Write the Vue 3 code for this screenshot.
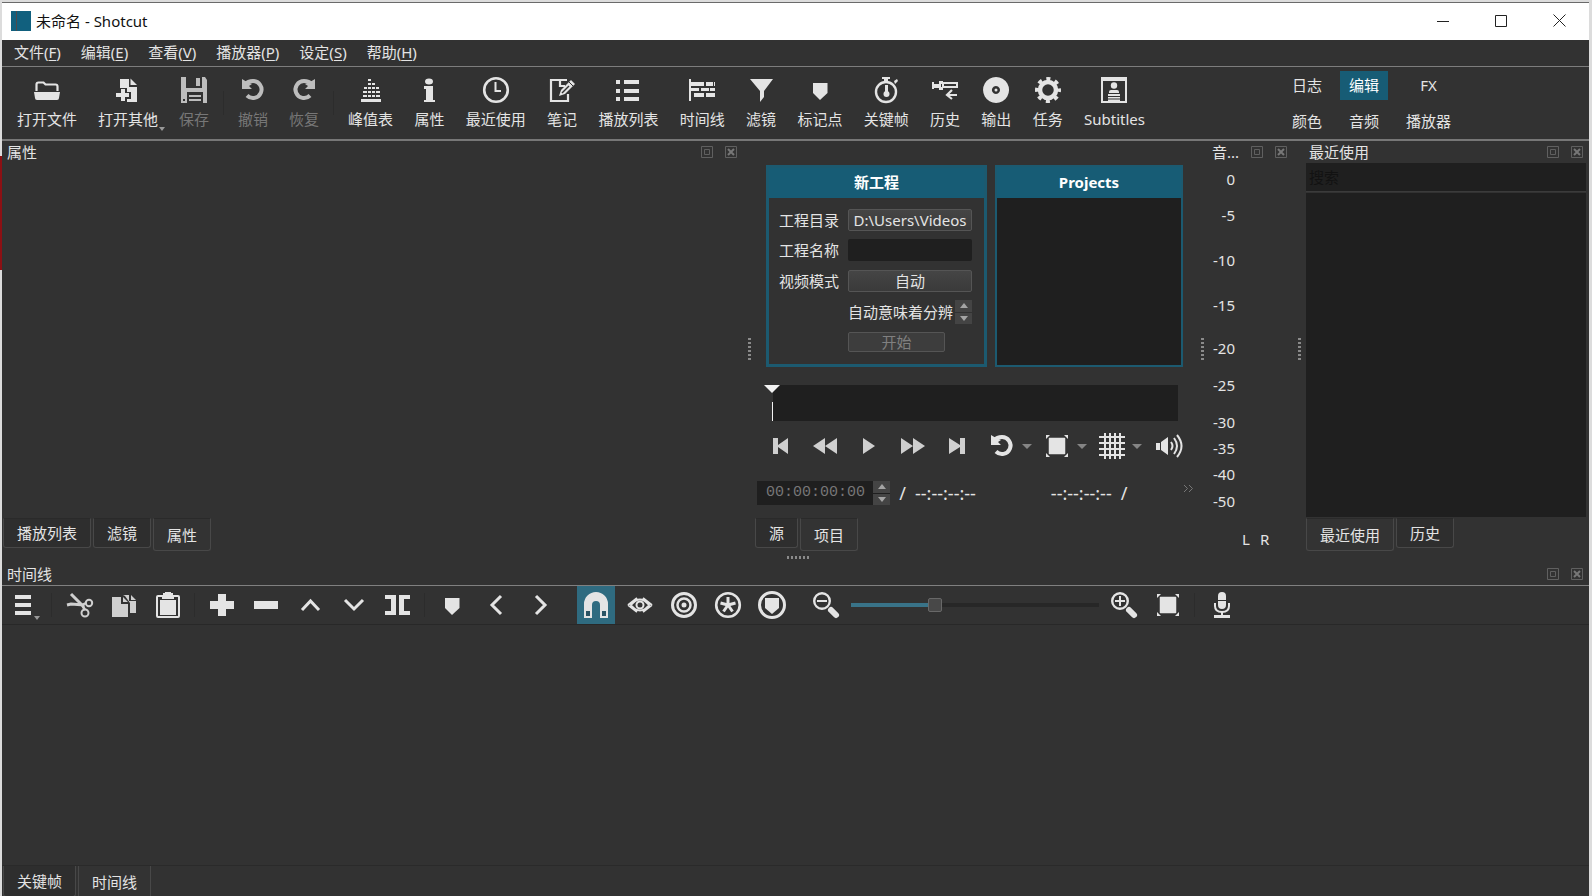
<script setup>
import { ref } from 'vue'

const shapes = {
  open: '<path d="M2.5 14V7.5q0-2 2-2h5l2 2h10q2 0 2 2V14" fill="none" stroke="currentColor" stroke-width="2.2"/><path d="M0 15h26l-1 6q0 2-2 2H3q-2 0-2-2z"/>',
  openOther: '<path d="M5 2h9v8h8v15H12v-3h4v-7h-4v-4H5z"/><path d="M15.5 1.5 22 8h-6.500z"/><path d="M6 12h4v4h4v4h-4v4H6v-4H1v-4h5z"/>',
  save: '<path fill-rule="evenodd" d="M0 0h5v11h16V0h3l2 3v23H0zM2 22v2h2v-2zM6 15v11h16V15z"/><path d="M15 1h4v8h-4zM8 18h12v2H8zM8 22h12v2H8z"/>',
  undo: '<path d="M5 7.500Q8 4 13 4a8.500 8.500 0 1 1-6 14.500" fill="none" stroke="currentColor" stroke-width="4"/><path d="M2 2v10h10L9 9l3-2-5-2z"/>',
  redo: '<path d="M21 7.500Q18 4 13 4a8.500 8.500 0 1 0 6 14.500" fill="none" stroke="currentColor" stroke-width="4"/><path d="M24 2v10H14l3-3-3-2 5-2z"/>',
  peak: '<path d="M3 22h20v3H3zM5 18h4v2H5zM10 18h3v2h-3zM14 18h3v2h-3zM18 18h4v2h-4zM5 14h4v2H5zM10 14h3v2h-3zM14 14h3v2h-3zM18 14h4v2h-4zM6 10h3v2H6zM10 10h3v2h-3zM14 10h3v2h-3zM18 10h3v2h-3zM10 6h3v2h-3zM14 6h3v2h-3zM10 2h3v2h-3z"/>',
  info: '<ellipse cx="13" cy="4.500" rx="4" ry="3"/><path d="M8 9h9v14h2v2H8v-2h2V12H8z"/>',
  clock: '<circle cx="13" cy="13" r="11.800" fill="none" stroke="currentColor" stroke-width="2.600"/><path d="M12.500 5v9H18" fill="none" stroke="currentColor" stroke-width="2"/>',
  note: '<path d="M18 3H2v21h17v-7M11 3v6h5" fill="none" stroke="currentColor" stroke-width="2.200"/><path d="m10 19 2-6L22 3l4 4-10 10z"/><path d="m13 16 7-7" stroke="#323232" stroke-width="1.500"/><path d="m20 5 4 4" stroke="#323232"/>',
  list: '<path d="M1 3h4v4H1zM9 3h15v4H9zM1 12h4v4H1zM9 12h15v4H9zM1 20h4v4H1zM9 20h15v4H9z"/>',
  timeline: '<path d="M0 2h2v22H0zM2 5h13v4H2zM17 5h7v4h-7zM25 5h1v4h-1zM2 11h8v3H2zM12 11h8v3h-8zM21 11h5v3h-5zM5 16h10v4H5zM17 16h9v4h-9z"/>',
  filter: '<path d="M2 2h23L16 14v6l-4 5V14z"/>',
  marker: '<path d="M6 6h14.500v10L13 23l-7-7z"/>',
  stopwatch: '<circle cx="13" cy="15" r="10" fill="none" stroke="currentColor" stroke-width="2.400"/><path d="M9 0h8v2h-2v4h-4V2H9zM21 4l3-2 1 2-3 3zM12 8h3v7h-3z"/><circle cx="13.500" cy="17" r="3"/>',
  history: '<path fill-rule="evenodd" d="M0 5h2v2h5V4h4v1h15v6H11v2H7v-2H2v1H0zM9 7v3h1V7zM12 7v2h12V7z"/><path d="M15 18h10M20 13l-5 5 5 4" fill="none" stroke="currentColor" stroke-width="2.200"/>',
  disc: '<path fill-rule="evenodd" d="M13 0a13 13 0 1 0 .1 0zM13 9a4 4 0 1 1-.1 0z"/><circle cx="13" cy="13" r="1.500"/>',
  gear: '<circle cx="13" cy="13" r="8" fill="none" stroke="currentColor" stroke-width="4.500"/><circle cx="13" cy="13" r="11" fill="none" stroke="currentColor" stroke-width="4" stroke-dasharray="4 4.640" stroke-dashoffset="2"/>',
  subtitles: '<path fill-rule="evenodd" d="M0 0h26v26H0zM2 4v20h22V4z"/><circle cx="13" cy="8.500" r="3.200"/><path d="M8 16v-1q0-2 2-2h6q2 0 2 2v1zM7 17h12v2H7zM7 20h12v1.500H7zM7 22.500h12V24H7z"/>',
  first: '<path d="M5 5h5v7l10-7v16l-10-7v7H5z"/>',
  rewind: '<path d="M13 5v16L1 13zM25 5v16L13 13z"/>',
  play: '<path d="M7 5v16l12-8z"/>',
  forward: '<path d="M1 5v16l12-8zM13 5v16l12-8z"/>',
  last: '<path d="M5 5l11 7V5h5v16h-5v-7L5 21z"/>',
  fit: '<path d="M5.500 5.500h15v15h-15z" stroke="currentColor" stroke-width="1.500" stroke-linejoin="round"/><path d="M2 2h4L2 6zM24 2v4l-4-4zM2 24v-4l4 4zM24 24h-4l4-4z"/>',
  grid: '<path d="M6 0v26M11 0v26M16 0v26M21 0v26M0 4h26M0 10h26M0 16h26M0 22h26" fill="none" stroke="currentColor" stroke-width="2"/>',
  volume: '<path d="M0 10h4v7H0zM5 9l7-5v18l-7-5z"/><path d="M15 9q3 4 0 8M18 5q6 8 0 16M21 2q9 11 0 22" fill="none" stroke="currentColor" stroke-width="2"/>',
  menu: '<path d="M5 3h16v4H5zM5 11h16v4H5zM5 19h16v4H5z"/>',
  cut: '<path d="M4 2 17 15M0 13l4-1 13 1" fill="none" stroke="currentColor" stroke-width="3"/><circle cx="22" cy="11" r="3.200" fill="none" stroke="currentColor" stroke-width="2"/><circle cx="18" cy="21" r="3.500" fill="none" stroke="currentColor" stroke-width="2"/><path d="m15 13 3 5M15 13l4-2" stroke="currentColor" stroke-width="2.500"/>',
  copy: '<path d="M1 5h9v7h7v13H1z"/><path d="m12 5 5 5h-5zM12 3l6 0v6h7v12h-6V11l-5-7zM20 3l5 5h-5z"/>',
  paste: '<path fill-rule="evenodd" d="M3 3h5V1h2V0h6v1h2v2h5q2 0 2 2v19q0 2-2 2H3q-2 0-2-2V5q0-2 2-2zm0 2v19h20V5h-4v2H7V5z"/><path d="M5 8h16v15H5z"/>',
  plus: '<path d="M9 2h8v7h8v8h-8v7H9v-7H1V9h8z"/>',
  minus: '<path d="M1 9h24v8H1z"/>',
  up: '<path d="m5 18 8.500-9 8.500 9" fill="none" stroke="currentColor" stroke-width="3"/>',
  down: '<path d="m4 8 9 9 9-9" fill="none" stroke="currentColor" stroke-width="3"/>',
  split: '<path d="M0 3h11v20H0v-4h6V7H0zM25 3H14v20h11v-4h-6V7h6z"/>',
  prev: '<path d="M18 4 9 13l9 9" fill="none" stroke="currentColor" stroke-width="3"/>',
  next: '<path d="m9 4 9 9-9 9" fill="none" stroke="currentColor" stroke-width="3"/>',
  magnet: '<path d="M1 26V12a12 12 0 0 1 24 0v14h-8V13a4 4 0 0 0-8 0v13z"/><path d="M3 19h4v5H3zM19 19h4v5h-4z" fill="#2b5363"/>',
  eye: '<path d="m1 13 9-7M1 13l9 7M25 13l-9-7M25 13l-9 7M4 13q9-11 18 0-9 11-18 0z" fill="none" stroke="currentColor" stroke-width="1.800"/><circle cx="13" cy="13" r="3.500" fill="none" stroke="currentColor" stroke-width="2"/>',
  ripple: '<circle cx="13" cy="13" r="11.500" fill="none" stroke="currentColor" stroke-width="3"/><circle cx="13" cy="13" r="6.500" fill="none" stroke="currentColor" stroke-width="2.500"/><circle cx="13" cy="13" r="2.500"/>',
  rippleAll: '<circle cx="13" cy="13" r="11.800" fill="none" stroke="currentColor" stroke-width="2.600"/><path d="M13 13V5M13 13l7.500-2M13 13l4.500 6.500M13 13l-4.500 6.500M13 13l-7.500-2" stroke="currentColor" stroke-width="3"/>',
  rippleMarker: '<circle cx="13" cy="13" r="12.500" fill="none" stroke="currentColor" stroke-width="3"/><path d="M6 6h14v10l-7 6-7-6z"/>',
  zoomOut: '<circle cx="9" cy="9" r="7.800" fill="none" stroke="currentColor" stroke-width="2.400"/><path d="M4 8h10v2H4z"/><path d="m18 18 5 5" stroke="currentColor" stroke-width="6" stroke-linecap="round"/>',
  zoomIn: '<circle cx="9" cy="9" r="7.800" fill="none" stroke="currentColor" stroke-width="2.400"/><path d="M4 8h4V4h2v4h4v2h-4v4H8v-4H4z"/><path d="m18 18 5 5" stroke="currentColor" stroke-width="6" stroke-linecap="round"/>',
  mic: '<path d="M9 8V4q0-4 4-4t4 4v4zM9 9h8v4q0 4-4 4t-4-4z"/><path d="M6 11v3q0 6 7 6t7-6v-3" fill="none" stroke="currentColor" stroke-width="2"/><path d="M12 20h2v3h7v3H5v-3h7z"/>'
}

const menus = [['文件', 'F'], ['编辑', 'E'], ['查看', 'V'], ['播放器', 'P'], ['设定', 'S'], ['帮助', 'H']]
const viewTools = [
  ['peak', '峰值表'], ['info', '属性'], ['clock', '最近使用'], ['note', '笔记'], ['list', '播放列表'],
  ['timeline', '时间线'], ['filter', '滤镜'], ['marker', '标记点'], ['stopwatch', '关键帧'],
  ['history', '历史'], ['disc', '输出'], ['gear', '任务'], ['subtitles', 'Subtitles']
]
const layouts = ['日志', '编辑', 'FX', '颜色', '音频', '播放器']
const transport = [['first', '跳到开头'], ['rewind', '快退'], ['play', '播放'], ['forward', '快进'], ['last', '跳到结尾']]
const transportMenus = [['undo', '循环'], ['fit', '缩放'], ['grid', '网格']]
const meter = [[-5, 36], [-10, 45], [-15, 45], [-20, 44], [-25, 37], [-30, 37], [-35, 26], [-40, 26], [-50, 27]]
const editTools = [['plus', '追加'], ['minus', '删除'], ['up', '提升'], ['down', '覆盖'], ['split', '分割']]
const markTools = [['marker', '标记'], ['prev', '上一个标记'], ['next', '下一个标记']]
const modeTools = [['magnet', '吸附'], ['eye', '拖拽预览'], ['ripple', '波纹'], ['rippleAll', '全部轨道波纹'], ['rippleMarker', '标记波纹']]

const activeLayout = ref('编辑')
const projectName = ref('')
const timecode = ref('00:00:00:00')
const search = ref('')
const zoom = ref(33)
</script>

<template>
  <div class="desktop">
    <div class="window">
      <header class="titlebar">
        <span class="app-icon"></span>
        <span class="title">未命名 - Shotcut</span>
        <button class="caption" aria-label="最小化"><svg width="12" height="12"><path d="M0 6.500h12" /></svg></button>
        <button class="caption" aria-label="最大化"><svg width="12" height="12"><path d="M.5.5h11v11H.5z" /></svg></button>
        <button class="caption" aria-label="关闭"><svg width="13" height="13"><path d="m.5.5 12 12m0-12-12 12" /></svg></button>
      </header>

      <nav class="menubar">
        <button v-for="m in menus" :key="m[1]">{{ m[0] }}(<u>{{ m[1] }}</u>)</button>
      </nav>

      <div class="toolbar">
        <button class="tool"><svg class="icon" viewBox="0 0 26 26" v-html="shapes.open"></svg>打开文件</button>
        <button class="tool other"><svg class="icon" viewBox="0 0 26 26" v-html="shapes.openOther"></svg>打开其他<i class="corner"></i></button>
        <button class="tool save" disabled><svg class="icon" viewBox="0 0 26 26" v-html="shapes.save"></svg>保存</button>
        <i class="sep"></i>
        <button class="tool" disabled><svg class="icon" viewBox="0 0 26 26" v-html="shapes.undo"></svg>撤销</button>
        <button class="tool redo" disabled><svg class="icon" viewBox="0 0 26 26" v-html="shapes.redo"></svg>恢复</button>
        <i class="sep"></i>
        <div class="view-tools">
          <button v-for="t in viewTools" :key="t[0]" class="tool">
            <svg class="icon" viewBox="0 0 26 26" v-html="shapes[t[0]]"></svg>{{ t[1] }}
          </button>
        </div>
        <div class="layouts">
          <button v-for="l in layouts" :key="l" :class="{ on: l === activeLayout }" @click="activeLayout = l">{{ l }}</button>
        </div>
      </div>

      <main class="docks">
        <section class="dock">
          <h2 class="dock-title"><span>属性</span>
            <button aria-label="浮动"><svg width="12" height="12"><path d="M.5.5h11v11H.5zM3.500 3.500h5v5h-5z" /></svg></button>
            <button aria-label="关闭"><svg width="12" height="12"><path d="M.5.5h11v11H.5z" /><path class="x" d="m3 3 6 6m0-6-6 6" /></svg></button>
          </h2>
          <div class="grow"></div>
          <div class="tabs"><button>播放列表</button><button>滤镜</button><button class="on">属性</button></div>
        </section>
        <i class="grip"></i>

        <section class="player">
          <div class="cards">
            <form class="card new" @submit.prevent>
              <h3>新工程</h3>
              <div class="fields">
                <label for="folder">工程目录</label><button id="folder" type="button" class="push">D:\Users\Videos</button>
                <label for="name">工程名称</label><input id="name" v-model="projectName" type="text">
                <label for="mode">视频模式</label><button id="mode" type="button" class="push">自动</button>
                <div class="hint"><span>自动意味着分辨</span>
                  <span class="spin"><button type="button" aria-label="向上"><i class="tri-up"></i></button><button type="button" aria-label="向下"><i class="tri-down"></i></button></span>
                </div>
                <button class="push start" disabled>开始</button>
              </div>
            </form>
            <div class="card recent">
              <h3>Projects</h3>
              <div class="project-list"></div>
            </div>
          </div>

          <div class="scrub"><i class="head"></i><i class="needle"></i></div>

          <div class="transport">
            <button v-for="t in transport" :key="t[0]" class="cell dim" :aria-label="t[1]"><svg class="icon" viewBox="0 0 26 26" v-html="shapes[t[0]]"></svg></button>
            <div class="drops">
              <button v-for="t in transportMenus" :key="t[0]" :aria-label="t[1]"><svg class="icon" viewBox="0 0 26 26" v-html="shapes[t[0]]"></svg><i class="drop"></i></button>
              <button class="volume" aria-label="音量"><svg class="icon" viewBox="0 0 26 26" v-html="shapes.volume"></svg></button>
            </div>
          </div>

          <div class="times">
            <div class="timecode">
              <input v-model="timecode" type="text" aria-label="时间码">
              <span class="spin"><button aria-label="增加"><i class="tri-up"></i></button><button aria-label="减少"><i class="tri-down"></i></button></span>
            </div>
            <span class="slash">/</span><span>--:--:--:--</span>
            <span class="selected">--:--:--:--</span><span class="slash">/</span>
            <button class="more" aria-label="更多"><svg width="11" height="9"><path d="m1 1 3.500 3.500L1 8m5-7 3.500 3.500L6 8" /></svg></button>
          </div>

          <div class="tabs flush"><button>源</button><button class="on">项目</button></div>
        </section>
        <i class="grip"></i>

        <section class="dock">
          <h2 class="dock-title audio"><span>音...</span>
            <button aria-label="浮动"><svg width="12" height="12"><path d="M.5.5h11v11H.5zM3.500 3.500h5v5h-5z" /></svg></button>
            <button aria-label="关闭"><svg width="12" height="12"><path d="M.5.5h11v11H.5z" /><path class="x" d="m3 3 6 6m0-6-6 6" /></svg></button>
          </h2>
          <div class="meter">
            <span>0</span>
            <span v-for="m in meter" :key="m[0]" :style="{ flexGrow: m[1] }">{{ m[0] }}</span>
          </div>
          <div class="channels"><span>L</span><span>R</span></div>
        </section>
        <i class="grip"></i>

        <section class="dock">
          <h2 class="dock-title files-title"><span>最近使用</span>
            <button aria-label="浮动"><svg width="12" height="12"><path d="M.5.5h11v11H.5zM3.500 3.500h5v5h-5z" /></svg></button>
            <button aria-label="关闭"><svg width="12" height="12"><path d="M.5.5h11v11H.5z" /><path class="x" d="m3 3 6 6m0-6-6 6" /></svg></button>
          </h2>
          <input v-model="search" class="search" type="text" placeholder="搜索" aria-label="搜索">
          <div class="files"></div>
          <div class="tabs flush"><button class="on">最近使用</button><button>历史</button></div>
        </section>
      </main>

      <i class="hgrip"></i>

      <section class="timeline">
        <h2 class="dock-title"><span>时间线</span>
          <button aria-label="浮动"><svg width="12" height="12"><path d="M.5.5h11v11H.5zM3.500 3.500h5v5h-5z" /></svg></button>
          <button aria-label="关闭"><svg width="12" height="12"><path d="M.5.5h11v11H.5z" /><path class="x" d="m3 3 6 6m0-6-6 6" /></svg></button>
        </h2>
        <div class="edit-bar">
          <button class="cell menu" aria-label="菜单"><svg class="icon" viewBox="0 0 26 26" v-html="shapes.menu"></svg><i class="corner"></i></button>
          <i class="sep first"></i>
          <button class="cell dim" aria-label="剪切"><svg class="icon" viewBox="0 0 26 26" v-html="shapes.cut"></svg></button>
          <button class="cell dim" aria-label="复制"><svg class="icon" viewBox="0 0 26 26" v-html="shapes.copy"></svg></button>
          <button class="cell" aria-label="粘贴"><svg class="icon" viewBox="0 0 26 26" v-html="shapes.paste"></svg></button>
          <i class="sep"></i>
          <button v-for="t in editTools" :key="t[0]" class="cell" :aria-label="t[1]"><svg class="icon" viewBox="0 0 26 26" v-html="shapes[t[0]]"></svg></button>
          <i class="sep"></i>
          <button v-for="t in markTools" :key="t[0]" class="cell" :aria-label="t[1]"><svg class="icon" viewBox="0 0 26 26" v-html="shapes[t[0]]"></svg></button>
          <div class="modes">
            <button v-for="t in modeTools" :key="t[0]" class="cell" :class="{ on: t[0] === 'magnet' }" :aria-label="t[1]"><svg class="icon" viewBox="0 0 26 26" v-html="shapes[t[0]]"></svg></button>
          </div>
          <button class="cell" aria-label="缩小"><svg class="icon" viewBox="0 0 26 26" v-html="shapes.zoomOut"></svg></button>
          <input v-model="zoom" class="zoom" type="range" min="0" max="100" aria-label="时间线缩放">
          <button class="cell" aria-label="放大"><svg class="icon" viewBox="0 0 26 26" v-html="shapes.zoomIn"></svg></button>
          <button class="cell" aria-label="适合窗口"><svg class="icon" viewBox="0 0 26 26" v-html="shapes.fit"></svg></button>
          <i class="sep"></i>
          <button class="cell" aria-label="录音"><svg class="icon" viewBox="0 0 26 26" v-html="shapes.mic"></svg></button>
        </div>
        <div class="grow"></div>
        <div class="tabs bottom"><button>关键帧</button><button class="on">时间线</button></div>
      </section>
    </div>
  </div>
</template>

<style>
body {
  margin: 0;
  background: #323232;
}
</style>

<style scoped>
* {
  box-sizing: border-box;
}

.desktop {
  min-height: 100vh;
  display: flex;
  padding: 2px 3px 0 2px;
  background: linear-gradient(#dcdcdc 156px, #8c1014 156px, #8c1014 270px, #dcdcdc 270px) left / 2px 100% no-repeat, #dcdcdc;
  font: 15px/20px "Noto Sans", "Noto Sans CJK SC", sans-serif;
  color: #e4e4e4;
}

.window {
  flex: 1;
  min-width: 0;
  display: flex;
  flex-direction: column;
  background: #323232;
  border-top: 1px solid #6a6a6a;
}

button,
input {
  font: inherit;
  color: inherit;
  border: 0;
  padding: 0;
  margin: 0;
  background: none;
}

button {
  white-space: nowrap;
}

h2,
h3 {
  margin: 0;
  font-size: 15px;
  font-weight: 400;
}

.grow {
  flex: 1;
}

.icon {
  display: block;
  flex: none;
  width: 26px;
  height: 26px;
  fill: currentColor;
  overflow: visible;
}

.titlebar {
  display: flex;
  align-items: center;
  height: 37px;
  padding: 0 1px 2px 9px;
  background: #fff;
  color: #111;
}

.app-icon {
  width: 20px;
  height: 20px;
  margin-right: 5px;
  background: linear-gradient(90deg, transparent 5px, #4c4a4c 5px, #4c4a4c 6px, transparent 6px), #11607e;
}

.title {
  flex: 1;
}

.caption {
  width: 58px;
  height: 35px;
  display: grid;
  place-items: center;
}

.caption svg {
  fill: none;
  stroke: #222;
}

.menubar {
  display: flex;
  gap: 20px;
  height: 27px;
  padding: 0 12px 2px;
  border-bottom: 1px solid #7d7d7d;
}

.menubar u {
  text-underline-offset: 2px;
}

.toolbar {
  display: flex;
  align-items: center;
  height: 74px;
  padding: 0 15px;
  border-bottom: 2px solid #777;
}

.tool {
  position: relative;
  display: flex;
  flex-direction: column;
  align-items: center;
  gap: 6px;
}

.tool:disabled {
  color: #777;
}

.tool:disabled .icon {
  color: #bdbdbd;
}

.other,
.save,
.redo {
  margin-left: 21px;
}

.corner {
  position: absolute;
  right: -7px;
  bottom: -2px;
  border: 3px solid transparent;
  border-top: 4px solid #999;
  border-bottom: 0;
}

.sep {
  width: 1px;
  height: 24px;
  margin: 0 14px;
  background: #2c2c2c;
}

.view-tools {
  display: flex;
  justify-content: space-between;
  flex: 0 1 797px;
}

.layouts {
  display: grid;
  grid-template-columns: 58px 56px 73px;
  row-gap: 7px;
  justify-items: center;
  margin: 0 109px 0 auto;
}

.layouts button {
  height: 29px;
  padding: 0 9px;
}

.layouts .on {
  background: #175c75;
  color: #fff;
}

.docks {
  display: grid;
  grid-template-columns: minmax(0, 1fr) 12px 441px 12px 84px 14px 283px;
  height: 409px;
}

.dock {
  display: flex;
  flex-direction: column;
  min-width: 0;
}

.dock-title {
  display: flex;
  align-items: center;
  gap: 12px;
  height: 22px;
  padding: 0 6px 0 5px;
}

.dock-title span {
  flex: 1;
}

.dock-title button {
  width: 12px;
  height: 12px;
}

.dock-title svg {
  display: block;
  fill: none;
  stroke: #606060;
}

.dock-title .x {
  stroke: #777;
  stroke-width: 2;
}

.grip {
  align-self: center;
  justify-self: center;
  width: 3px;
  height: 22px;
  margin-top: 6px;
  background: repeating-linear-gradient(#8a8a8a 0 2px, transparent 2px 4px);
}

.hgrip {
  width: 22px;
  height: 3px;
  margin: 6px 0 4px 785px;
  background: repeating-linear-gradient(90deg, #8a8a8a 0 2px, transparent 2px 4px);
}

.tabs {
  display: flex;
  align-items: flex-start;
  gap: 2px;
  height: 33px;
  padding-left: 1px;
}

.tabs button {
  height: 30px;
  padding: 0 13px;
  background: #2e2e2e;
  border: 1px solid #484848;
  border-top-color: #2a2a2a;
  border-radius: 0 0 3px 3px;
}

.tabs .on {
  height: 33px;
  background: #333;
}

.tabs.flush {
  padding-left: 0;
}

.player {
  display: flex;
  flex-direction: column;
  padding-top: 24px;
}

.cards {
  display: grid;
  grid-template-columns: 221px 188px;
  gap: 8px;
  padding-left: 11px;
}

.card {
  display: flex;
  flex-direction: column;
  border: 2px solid #1c5a70;
}

.card.new {
  border-width: 3px;
}

.card h3 {
  height: 31px;
  line-height: 31px;
  text-align: center;
  font-weight: 700;
  color: #fff;
  background: #175c75;
}

.card.new h3 {
  height: 30px;
  line-height: 28px;
}

.project-list {
  flex: 1;
  background: #1f1f1f;
}

.fields {
  display: grid;
  grid-template-columns: 61px 1fr;
  grid-template-rows: 22px 22px 24px 22px 22px;
  gap: 8px;
  align-items: center;
  padding: 11px 12px 11px 10px;
}

.fields input {
  width: 100%;
  height: 22px;
  background: #1f1f1f;
  border-radius: 2px;
}

.push {
  height: 22px;
  border: 1px solid #555;
  border-radius: 2px;
  background: linear-gradient(#454545, #3a3a3a);
  line-height: 18px;
}

.push:disabled {
  height: 20px;
  color: #808080;
  background: #3d3d3d;
}

.start {
  grid-column: 2;
  width: 97px;
}

.hint {
  grid-column: 2;
  display: flex;
  align-items: center;
  justify-content: space-between;
  white-space: nowrap;
}

.spin {
  display: grid;
  grid-template-rows: 1fr 1fr;
  gap: 1px;
  width: 17px;
  height: 24px;
}

.spin button {
  display: grid;
  place-items: center;
  background: #444;
}

.tri-up,
.tri-down,
.drop {
  border: 4px solid transparent;
}

.tri-up {
  border-top: 0;
  border-bottom: 5px solid #a4a4a4;
}

.tri-down {
  border-bottom: 0;
  border-top: 5px solid #a4a4a4;
}

.scrub {
  position: relative;
  height: 36px;
  margin: 18px 18px 0;
  background: #1f1f1f;
}

.head {
  position: absolute;
  left: -9px;
  top: 0;
  border: 8px solid transparent;
  border-top-color: #f2f2f2;
  border-bottom: 0;
}

.needle {
  position: absolute;
  left: -1px;
  bottom: 0;
  width: 1px;
  height: 19px;
  background: #f2f2f2;
}

.transport {
  display: flex;
  align-items: center;
  gap: 6px;
  height: 32px;
  margin-top: 9px;
  padding-left: 7px;
}

.cell {
  position: relative;
  display: grid;
  place-items: center;
  flex: none;
  width: 38px;
  height: 38px;
}

.dim {
  color: #cfcfcf;
}

.drops {
  display: flex;
  gap: 12px;
  margin-left: 7px;
}

.drops button {
  display: flex;
  align-items: center;
  gap: 7px;
}

.drops .volume {
  margin-left: 2px;
}

.drop {
  border-width: 5px;
  border-top-color: #858585;
  border-bottom: 0;
}

.times {
  display: flex;
  align-items: center;
  height: 24px;
  margin: 19px 0 13px;
  padding-left: 2px;
  font-size: 18px;
}

.timecode {
  display: flex;
  width: 133px;
  height: 24px;
  background: #1f1f1f;
}

.timecode input {
  flex: 1;
  min-width: 0;
  padding-left: 9px;
  font: 15px/22px "Liberation Mono", monospace;
  color: #777;
}

.slash {
  width: 25px;
  text-align: center;
}

.selected {
  margin-left: 75px;
}

.more {
  margin: 0 2px 10px auto;
  line-height: 0;
}

.more svg {
  fill: none;
  stroke: #777;
}

.dock-title.audio {
  padding-left: 4px;
}

.dock-title.files-title {
  padding-left: 3px;
}

.meter {
  display: flex;
  flex-direction: column;
  height: 342px;
  margin: 6px 57px 0 0;
  text-align: right;
}

.meter span {
  display: flex;
  flex: 1 1 0;
  min-height: 0;
  align-items: flex-end;
  justify-content: flex-end;
}

.meter span:first-child {
  flex: none;
}

.channels {
  display: flex;
  gap: 10px;
  margin: 18px 0 0 34px;
}

.search {
  height: 29px;
  padding: 0 3px;
  margin: 0 3px 0 0;
  background: #1f1f1f;
  border-bottom: 1px solid #3b3b3b;
}

.search::placeholder {
  color: #121212;
  opacity: 1;
}

.files {
  flex: 1;
  margin: 1px 3px 1px 0;
  background: #1f1f1f;
}

.timeline {
  flex: 1;
  display: flex;
  flex-direction: column;
}

.edit-bar {
  display: flex;
  align-items: center;
  gap: 6px;
  height: 40px;
  padding-left: 2px;
  border-top: 1px solid #808080;
  border-bottom: 1px solid #282828;
}

.edit-bar .sep {
  margin: 0 2px 0 1px;
}

.edit-bar .sep.first {
  margin: 0 3px;
}

.edit-bar .corner {
  right: 2px;
  bottom: 4px;
}

.modes {
  display: flex;
  gap: 6px;
  margin: 0 10px 0 12px;
}

.modes .on {
  background: #2f6b80;
}

.zoom {
  appearance: none;
  flex: none;
  width: 248px;
  height: 16px;
}

.zoom::-webkit-slider-runnable-track {
  height: 4px;
  background: linear-gradient(90deg, #397388 33%, #272727 33%);
}

.zoom::-webkit-slider-thumb {
  appearance: none;
  width: 14px;
  height: 14px;
  margin-top: -5px;
  border: 1px solid #686868;
  border-radius: 2px;
  background: #484848;
}

.tabs.bottom {
  height: 31px;
  border-top: 1px solid #2a2a2a;
}

.tabs.bottom button {
  height: 31px;
  border-top: 0;
}

.tabs.bottom .on {
  height: 33px;
}
</style>
